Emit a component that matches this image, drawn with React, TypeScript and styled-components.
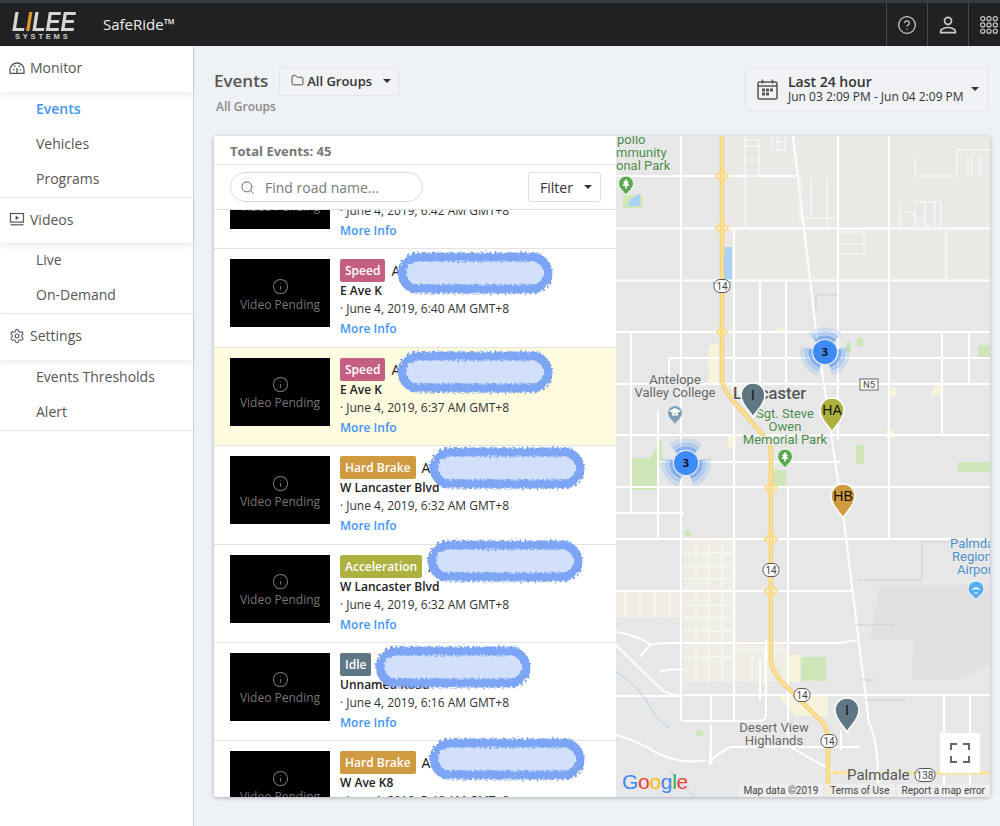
import React from 'react';
import styled, {createGlobalStyle} from 'styled-components';
import {CircleHelp, Folder, Info, Search, Settings} from 'lucide-react';

const GlobalStyle = createGlobalStyle`
  html, body {
    margin: 0;
    height: 826px;
    overflow: hidden;
    background: #eef1f6;
    font-family: "Open Sans", "Liberation Sans", sans-serif;
    color: #212121;
  }
  * { box-sizing: border-box; }
`;

const Page = styled.div`
  width: 1000px;
  height: 826px;
  display: flex;
  flex-direction: column;
  overflow: hidden;
`;

const TopBar = styled.header`
  flex: none;
  height: 46px;
  display: flex;
  align-items: stretch;
  background: #212121;
  border-top: 3px solid #373b3e;
  color: #fff;
`;

const Logo = styled.div`
  width: 103px;
  padding: 7px 0 0 12px;
  display: flex;
  flex-direction: column;
  align-items: flex-start;
`;

const LogoWord = styled.div`
  font-family: "Liberation Sans", sans-serif;
  font-size: 28px;
  line-height: 23px;
  height: 23px;
  font-weight: 700;
  font-style: italic;
  color: #d6d6d6;
  transform: scaleX(0.8);
  transform-origin: left center;
  span { color: #d99a2b; }
`;

const LogoSub = styled.div`
  font-family: "Liberation Sans", sans-serif;
  font-size: 7.5px;
  line-height: 7px;
  margin-left: 3px;
  font-weight: 700;
  letter-spacing: 2.8px;
  color: #cfcfcf;
`;

const Product = styled.div`
  font-size: 15px;
  line-height: 44px;
  margin-top: -1px;
  color: #eee;
  flex: 1;
`;

const TopCell = styled.div<{$clipped?: boolean}>`
  width: ${(p) => (p.$clipped ? 32 : 41)}px;
  display: flex;
  align-items: center;
  justify-content: ${(p) => (p.$clipped ? 'flex-start' : 'center')};
  padding-left: ${(p) => (p.$clipped ? 11 : 0)}px;
  border-left: 1px solid #4a4a4a;
  color: #ccc;
`;

const Body = styled.div`
  flex: 1;
  display: flex;
  min-height: 0;
`;

const Sidebar = styled.nav`
  width: 194px;
  flex: none;
  background: #fff;
  border-right: 1px solid #cfd2d6;
`;

const NavGroup = styled.div`
  border-bottom: 1px solid #e6e7e9;
`;

const NavHead = styled.div`
  height: 45.5px;
  padding: 0 0 2px 9px;
  display: flex;
  align-items: center;
  gap: 5px;
  font-size: 14px;
  color: #555;
  box-shadow: 0 3px 5px rgba(0, 0, 0, 0.07);
  svg { flex: none; }
`;

const NavItem = styled.div<{$active?: boolean}>`
  height: 35px;
  padding: 0 0 2px 36px;
  display: flex;
  align-items: center;
  font-size: 14px;
  color: ${(p) => (p.$active ? '#3f94f5' : '#555')};
  font-weight: ${(p) => (p.$active ? 600 : 400)};
`;

const Main = styled.main`
  flex: 1;
  min-width: 0;
  padding: 19px 10px 0 20px;
  display: flex;
  flex-direction: column;
`;

const TitleRow = styled.div`
  height: 71px;
  display: flex;
  justify-content: space-between;
  align-items: flex-start;
  flex: none;
`;

const TitleBlock = styled.div`
  display: flex;
  flex-direction: column;
`;

const TitleLine = styled.div`
  display: flex;
  align-items: center;
  gap: 11px;
  margin-top: 2px;
  height: 29px;
`;

const Title = styled.div`
  font-size: 17px;
  font-weight: 600;
  color: #555;
  padding-bottom: 2px;
`;

const GroupButton = styled.div`
  width: 120px;
  height: 29px;
  display: flex;
  align-items: center;
  padding: 0 0 2px 11px;
  gap: 3px;
  font-size: 13px;
  font-weight: 600;
  color: #333;
  border: 1px solid #e2e5ea;
  border-radius: 3px;
  background: #f0f2f6;
`;

const Caret = styled.i<{$ml?: number}>`
  display: block;
  width: 0;
  height: 0;
  margin-left: ${(p) => p.$ml ?? 8}px;
  border: 4px solid transparent;
  border-top: 4px solid #333;
  border-bottom: 0;
`;

const SubTitle = styled.div`
  margin: 2px 0 0 2px;
  font-size: 12px;
  font-weight: 600;
  color: #8a8a8a;
`;

const DateBox = styled.div`
  width: 244px;
  height: 44px;
  margin: 2px 1px 0 0;
  display: flex;
  align-items: center;
  padding-left: 11px;
  border: 1px solid #e2e5ea;
  border-radius: 3px;
  background: #f0f2f6;
`;

const DateText = styled.div`
  margin-left: 10px;
  display: flex;
  flex-direction: column;
`;

const DateTop = styled.div`
  font-size: 14px;
  line-height: 16px;
  font-weight: 600;
  color: #333;
`;

const DateBottom = styled.div`
  font-size: 12px;
  line-height: 14px;
  white-space: nowrap;
  color: #333;
`;

const Panel = styled.section`
  width: 776px;
  height: 661px;
  flex: none;
  display: flex;
  background: #fff;
  border-radius: 3px;
  box-shadow: 0 1px 4px rgba(0, 0, 0, 0.28);
  overflow: hidden;
`;

const ListPane = styled.div`
  width: 402px;
  flex: none;
  display: flex;
  flex-direction: column;
  min-height: 0;
`;

const TotalRow = styled.div`
  height: 29px;
  flex: none;
  padding: 2px 0 0 16px;
  display: flex;
  align-items: center;
  font-size: 13px;
  font-weight: 700;
  color: #777;
  border-bottom: 1px solid #e4e4e4;
`;

const SearchRow = styled.div`
  height: 45px;
  flex: none;
  display: flex;
  align-items: center;
  justify-content: space-between;
  padding: 0 15px 0 16px;
  border-bottom: 1px solid #e4e4e4;
  position: relative;
  z-index: 1;
  background: #fff;
`;

const SearchBox = styled.div`
  width: 193px;
  height: 30px;
  display: flex;
  align-items: center;
  gap: 10px;
  padding-left: 9px;
  border: 1px solid #d9d9d9;
  border-radius: 15px;
  font-size: 14px;
  color: #777;
`;

const FilterButton = styled.div`
  width: 73px;
  height: 30px;
  display: flex;
  align-items: center;
  padding-left: 11px;
  font-size: 14px;
  color: #333;
  border: 1px solid #dedede;
  border-radius: 3px;
`;

const EventList = styled.div`
  flex: 1;
  min-height: 0;
  overflow: hidden;
`;

const EventRows = styled.div`
  margin-top: -59px;
`;

const Row = styled.article<{$selected?: boolean}>`
  position: relative;
  height: 98.4px;
  padding: 10px 16px 0;
  display: flex;
  gap: 10px;
  background: ${(p) => (p.$selected ? '#fffbdf' : '#fff')};
  border-bottom: 1px solid #e2e2e2;
`;

const Thumb = styled.div`
  width: 100px;
  height: 68px;
  flex: none;
  padding-top: 4px;
  background: #000;
  color: #777;
  font-size: 12px;
  display: flex;
  flex-direction: column;
  align-items: center;
  justify-content: center;
  gap: 1px;
`;

const RowBody = styled.div`
  min-width: 0;
  display: flex;
  flex-direction: column;
`;

const TitleMeta = styled.div`
  display: flex;
  align-items: center;
  height: 23px;
  gap: 6px;
  font-size: 14px;
`;

const Badge = styled.span<{$color: string}>`
  height: 23px;
  padding: 0 5px;
  display: inline-flex;
  align-items: center;
  border-radius: 2px;
  background: ${(p) => p.$color};
  font-size: 12px;
  font-weight: 600;
  color: #fff;
`;

const Road = styled.div`
  font-size: 12px;
  line-height: 17px;
  font-weight: 600;
  color: #212121;
`;

const DateLine = styled.div`
  margin-top: 1px;
  font-size: 12px;
  line-height: 18px;
  color: #333;
`;

const MoreInfo = styled.a`
  margin-top: 2px;
  font-size: 12px;
  line-height: 18px;
  font-weight: 600;
  color: #3f94f5;
`;

const Scribble = styled.svg<{$left: number; $top: number}>`
  position: absolute;
  left: ${(p) => p.$left}px;
  top: ${(p) => p.$top}px;
  width: 166px;
  height: 56px;
`;

const MapPane = styled.div`
  position: relative;
  flex: 1;
  min-width: 0;
  background: #e7e7e7;
  overflow: hidden;
`;

const MapArt = styled.svg`
  display: block;
  width: 374px;
  height: 661px;
  font-family: Roboto, sans-serif;
`;

const Pin = styled.svg<{$x: number; $y: number}>`
  position: absolute;
  left: ${(p) => p.$x - 616 - 14}px;
  top: ${(p) => p.$y - 136 - 2}px;
  width: 28px;
  height: 38px;
`;

const Cluster = styled.svg<{$x: number; $y: number}>`
  position: absolute;
  left: ${(p) => p.$x - 616 - 28}px;
  top: ${(p) => p.$y - 136 - 28}px;
  width: 56px;
  height: 56px;
`;

const FullScreen = styled.div`
  position: absolute;
  right: 10px;
  bottom: 24px;
  width: 40px;
  height: 40px;
  background: #fff;
  display: flex;
  align-items: center;
  justify-content: center;
`;

const GoogleMark = styled.div`
  position: absolute;
  left: 6px;
  bottom: 2px;
  font-family: "Liberation Sans", sans-serif;
  font-size: 21px;
  line-height: 26px;
  letter-spacing: -0.3px;
`;

const Letter = styled.span<{$c: string}>`
  color: ${(p) => p.$c};
`;

const Attribution = styled.div`
  position: absolute;
  right: 0;
  bottom: 0;
  height: 13px;
  display: flex;
  gap: 2px;
  font-family: Roboto, sans-serif;
  font-size: 10px;
  line-height: 13px;
  color: #444;
`;

const AttrCell = styled.span`
  padding: 0 5px;
  background: rgba(240, 240, 240, 0.75);
`;

const GaugeIcon = () => (
  <svg width="16" height="14" viewBox="0 0 16 14" fill="none" stroke="#555" strokeWidth="1.3">
    <path d="M1 12.3V9a7 7 0 0 1 14 0v3.3H1Z" />
    <path d="M8 12V7M4 8.5l1.4.8M12 8.5l-1.4.8M5.5 4.6l.8 1.2M10.5 4.6l-.8 1.2" />
  </svg>
);

const VideoIcon = () => (
  <svg width="16" height="14" viewBox="0 0 16 14" fill="none" stroke="#555" strokeWidth="1.2">
    <rect x="1.5" y="1.5" width="13" height="8.6" />
    <path d="M1.5 12.8h13" />
    <path d="M6.6 3.7v4.2L10.2 5.8Z" fill="#555" stroke="none" />
  </svg>
);

const PersonIcon = () => (
  <svg width="20" height="20" viewBox="0 0 20 20" fill="none" stroke="#ccc" strokeWidth="1.7">
    <circle cx="10" cy="5.8" r="3.5" />
    <path d="M2.6 17.6v-1.3c0-2.6 4.6-3.8 7.4-3.8s7.4 1.2 7.4 3.8v1.3H2.6Z" />
  </svg>
);

const AppsIcon = () => (
  <svg width="18" height="18" viewBox="0 0 20 20" fill="none" stroke="#ccc" strokeWidth="1.3">
    {[3, 10, 17].map((y) =>
      [3, 10, 17].map((x) => <circle key={`${x}-${y}`} cx={x} cy={y} r="2.3" />),
    )}
  </svg>
);

const CalendarIcon = () => (
  <svg width="21" height="21" viewBox="0 0 21 21" fill="none" stroke="#555" strokeWidth="1.5">
    <rect x="1" y="3" width="19" height="17" rx="1.5" />
    <path d="M5.5 0.5v4M15.5 0.5v4M1 7h19" />
    <path
      d="M5 9.5h3v3H5zM9 9.5h3v3H9zM13 9.5h3v3h-3zM5 13.5h3v3H5zM9 13.5h3v3H9z"
      fill="#555"
      stroke="none"
    />
  </svg>
);

// same rough stroke as the marker scribble over the addresses
const Blob: React.FC<{left: number; top: number}> = ({left, top}) => (
  <Scribble $left={left} $top={top} viewBox="0 0 166 56">
    <defs>
      <filter id="rough" x="-10%" y="-20%" width="120%" height="150%">
        <feTurbulence type="fractalNoise" baseFrequency="0.4" numOctaves="2" seed="4" />
        <feDisplacementMap in="SourceGraphic" scale="6" />
      </filter>
      <filter id="soft" x="-10%" y="-20%" width="120%" height="150%">
        <feGaussianBlur stdDeviation="1.6" />
      </filter>
    </defs>
    <rect x="12" y="13" width="146" height="32" rx="16" fill="#555" opacity="0.3" filter="url(#soft)" />
    <rect
      x="12"
      y="10"
      width="146"
      height="32"
      rx="16"
      fill="#d3e0fb"
      stroke="#7ca5f5"
      strokeWidth="9"
      filter="url(#rough)"
    />
  </Scribble>
);

const events = [
  {kind: 'Speed', color: '#c45f82', road: 'E Ave K', time: '6:42 AM', blob: null},
  {kind: 'Speed', color: '#c45f82', road: 'E Ave K', time: '6:40 AM', blob: [176, -2]},
  {kind: 'Speed', color: '#c45f82', road: 'E Ave K', time: '6:37 AM', blob: [176, -2], selected: true},
  {kind: 'Hard Brake', color: '#cf9a40', road: 'W Lancaster Blvd', time: '6:32 AM', blob: [208, -4]},
  {kind: 'Acceleration', color: '#aeb13f', road: 'W Lancaster Blvd', time: '6:32 AM', blob: [206, -10]},
  {kind: 'Idle', color: '#5f7684', road: 'Unnamed Road', time: '6:16 AM', blob: [154, -2], noLead: true},
  {kind: 'Hard Brake', color: '#cf9a40', road: 'W Ave K8', time: '5:46 AM', blob: [208, -8]},
];

const roads = [
  'M616 176H796',
  'M616 228.500H990',
  'M616 280.500H990',
  'M616 332H990',
  'M669 358H990',
  'M616 384H990',
  'M616 435H990',
  'M657 462H840',
  'M616 487H990',
  'M616 513H684',
  'M616 539H990',
  'M616 591H852',
  'M616 696H684M684 695H990',
  'M684 721H760q6 0 6-8V640',
  'M681 136V721',
  'M734 230V721',
  'M760 280V384M760 660V700',
  'M786 280V400M788 487V747',
  'M838 136V440',
  'M889 136V539',
  'M942 332V435M969 332V384M944 695V797M970 695V797',
  'M631 332V513M658 410V539',
  'M669 358V384',
  'M793 136L816 330L833 447L843 513L869 723Q876 735 878 770V797',
  'M616 632Q640 636 650 645L640 657M650 645Q655 643 670 643H840L857 640',
  'M616 645L660 688Q666 695 684 696M660 672Q668 668 684 670',
  'M710 750V765Q710 758 730 747H860M790 747L835 772',
  'M616 735Q640 742 655 752Q680 765 706 760',
  'M711 696V721M711 725V760M841 730V750',
];

const thinRoads = [
  'M745 136V230M796 178H800V218H838M811 178V218M827 178V228',
  'M745 140H759V176H745M745 146H759M745 160H759M772 136V150H785V136M772 142H785M778 136V150',
  'M915 202H941V228M915 210V228M957 150V176H915V158M972 158V176M968 158V176M957 150H990M980 158V176',
  'M900 202V228H941M900 212H910L930 228M925 202V228M935 202V228',
  'M838 232H864V254H838M838 244H864',
  'M946 280V228',
];

const MapLabel = styled.text<{$color?: string; $size?: number}>`
  fill: ${(p) => p.$color ?? '#666'};
  font-size: ${(p) => p.$size ?? 13}px;
  stroke: #ececec;
  stroke-width: 2px;
  paint-order: stroke;
`;

const ParkPin: React.FC<{x: number; y: number; fill: string}> = ({x, y, fill}) => (
  <g transform={`translate(${x} ${y})`}>
    <path d="M0 9C-3 5-7.500 2-7.500-2.500a7.500 7.500 0 0 1 15 0C7.500 2 3 5 0 9Z" fill={fill} stroke="#fff" />
    <path d="M0-7l3 4H1.500l2 3h-7l2-3H-3ZM-.8 0h1.600v2.500h-1.600Z" fill="#fff" />
  </g>
);

const Shield: React.FC<{x: number; y: number; w?: number; text?: string}> = ({
  x,
  y,
  w = 16,
  text = '14',
}) => (
  <g>
    <rect x={x - w / 2} y={y - 6.500} width={w} height="13" rx="6" fill="#fff" stroke="#555" />
    <text x={x} y={y + 3.500} fontSize="10" fill="#444" textAnchor="middle">
      {text}
    </text>
  </g>
);

const MarkerPin: React.FC<{x: number; y: number; color: string; label: string}> = ({
  x,
  y,
  color,
  label,
}) => (
  <Pin $x={x} $y={y} viewBox="0 0 28 38">
    <path
      d="M14 36C10.500 29 2 24 2 14a12 12 0 0 1 24 0c0 10-8.500 15-12 22Z"
      fill={color}
      stroke="#fff"
      strokeWidth="1.500"
    />
    <text x="14" y="19" fontSize="14" fontFamily="Liberation Sans, sans-serif" textAnchor="middle" fill="#111">
      {label}
    </text>
  </Pin>
);

const arc = (r: number) => {
  const a = (42 * Math.PI) / 180;
  const x = r * Math.sin(a);
  const y = r * Math.cos(a);
  return `M${-x} ${-y}A${r} ${r} 0 0 1 ${x} ${-y}`;
};

const ClusterMark: React.FC<{x: number; y: number}> = ({x, y}) => (
  <Cluster $x={x} $y={y} viewBox="-28 -28 56 56">
    {[0, 120, 240].map((a) => (
      <g key={a} transform={`rotate(${a})`} fill="none" stroke="#3f8cf5" strokeWidth="3.500">
        <path d={arc(15)} opacity="0.6" />
        <path d={arc(19)} opacity="0.32" />
        <path d={arc(23)} opacity="0.16" />
      </g>
    ))}
    <circle r="12" fill="#3d8bf7" />
    <text y="4" fontSize="11" fontWeight="700" fontFamily="Open Sans, sans-serif" textAnchor="middle" fill="#111">
      3
    </text>
  </Cluster>
);

const HIGHWAY =
  'M722 136V378Q722 386 729 396L768 441Q771 446 771 456V660Q771 668 780 680L823 723Q828 730 828 742V797';

const MapDrawing = () => (
  <MapArt viewBox="616 136 374 661">
    <rect x="616" y="136" width="374" height="661" fill="#e7e7e7" />
    <rect x="720" y="136" width="270" height="145" fill="#ebe9e5" />
    <path d="M880 585H990V665L960 680H912L914 640H870Z" fill="#e1e1e1" />
    <path d="M684 540H736V682H684ZM736 645H788V682H736ZM616 592H684V618H616Z" fill="#efede5" />
    <path
      d="M696 540V682M709 540V682M722 540V682M684 553H736M684 566H736M684 579H736M684 605H736M684 618H736M684 631H736M684 657H736M736 650H786M752 645V682M765 645V682M625 592V618M640 592V618M655 592V618M670 592V618"
      stroke="#f8f6ef"
      strokeWidth="1.500"
      fill="none"
    />

    <path d="M801 657H826V682L810 680L801 682Z" fill="#cfe7b8" />
    <path d="M632 458H650L660 440H662V466H657V490H632Z" fill="#cfe7b8" />
    <path d="M846 342H851V352H846ZM857 338H863V346H857ZM856 445H864V464H856ZM978 345H990V358H978ZM958 462H990V472H958ZM685 530H691V536H685ZM696 730H703V736H696ZM623 195H642V208H623Z" fill="#cfe7b8" />
    <path d="M772 470H786V487H772Z" fill="#cfe7b8" />
    <path d="M725 247H732V283H722Z" fill="#a9d2f5" />
    <path d="M711 282H722V292Z" fill="#a9d2f5" />
    <path d="M630 200L640 193V206H628Z" fill="#a9d2f5" />
    <path d="M709 345L719 343V383H708ZM776 330Q784 325 793 333L786 334Q780 330 776 333ZM730 384H742V395H734Z" fill="#faf3dc" />
    <path d="M778 695H828V716H795ZM786 655H800V682H786ZM888 396H896V388H892ZM935 385H942V395H930ZM886 430H894V438H886ZM728 435H736V448H728Z" fill="#faf3dc" />

    <g fill="none" stroke="#fff" strokeWidth="2">
      {roads.map((d, i) => (
        <path key={i} d={d} />
      ))}
    </g>
    <g fill="none" stroke="#f6f6f4" strokeWidth="1.500">
      {thinRoads.map((d, i) => (
        <path key={i} d={d} />
      ))}
    </g>
    <g fill="none" stroke="#cfcfcf" strokeWidth="1">
      <path d="M816 310V295H838M858 580H922V542H990M856 625H895M860 680H875M866 700H905" />
    </g>
    <g fill="none" stroke="#a9d2f5" strokeWidth="1">
      <path d="M616 672Q640 685 655 715Q668 730 670 727M670 770Q680 785 695 797" />
    </g>

    <path d={HIGHWAY} fill="none" stroke="#f0cf76" strokeWidth="4.500" />
    <path d={HIGHWAY} fill="none" stroke="#fde293" strokeWidth="2.500" />
    <path d="M828 772Q840 773 850 773H990" fill="none" stroke="#fde293" strokeWidth="3" />
    <g fill="none" stroke="#fbdc8c" strokeWidth="2">
      <path d="M716 176l6-6 6 6-6 6ZM716 228l6-6 6 6-6 6ZM717 332l5-6 5 6-5 6ZM765 539l6-7 6 7-6 7ZM765 591l6-7 6 7-6 7ZM765 488l6-7 6 7-6 7Z" />
    </g>

    <Shield x={722} y={286} />
    <Shield x={771} y={570} />
    <Shield x={802} y={695} />
    <Shield x={829} y={741} />
    <Shield x={925} y={775} w={20} text="138" />
    <g>
      <rect x="860" y="379" width="18" height="11" fill="#fff" stroke="#666" />
      <text x="869" y="388" fontSize="9.500" fill="#444" textAnchor="middle">
        N5
      </text>
    </g>

    <MapLabel x="617" y="144" $color="#4b8a4a">pollo</MapLabel>
    <MapLabel x="616" y="157" $color="#4b8a4a">mmunity</MapLabel>
    <MapLabel x="616" y="170" $color="#4b8a4a">onal Park</MapLabel>
    <ParkPin x={626} y={186} fill="#5aa84f" />
    <MapLabel x="675" y="384" textAnchor="middle">Antelope</MapLabel>
    <MapLabel x="675" y="397" textAnchor="middle">Valley College</MapLabel>
    <path d="M675 424c-2-4-7-6-7-11a7 7 0 0 1 14 0c0 5-5 7-7 11Z" fill="#7e9db4" />
    <path d="M669 411l6-3 6 3-6 3ZM672 413v2.500h6V413Z" fill="#fff" />
    <MapLabel x="733" y="399" $size={16.500} $color="#555" fontWeight="500">Lancaster</MapLabel>
    <MapLabel x="785" y="418" textAnchor="middle" $color="#4b8a4a">Sgt. Steve</MapLabel>
    <MapLabel x="785" y="431" textAnchor="middle" $color="#4b8a4a">Owen</MapLabel>
    <MapLabel x="785" y="444" textAnchor="middle" $color="#4b8a4a">Memorial Park</MapLabel>
    <ParkPin x={785} y={459} fill="#5aa84f" />
    <MapLabel x="950" y="548" $color="#4a90c8">Palmdale</MapLabel>
    <MapLabel x="952" y="561" $color="#4a90c8">Regional</MapLabel>
    <MapLabel x="957" y="574" $color="#4a90c8">Airport</MapLabel>
    <path d="M976 600c-2-4-8-6-8-11a8 8 0 0 1 16 0c0 5-6 7-8 11Z" fill="#55aef0" stroke="#fff" />
    <path d="M976 583v4l-4 2v1l4-1v3l-1.500 1v1l1.500-.5 1.500.5v-1l-1.500-1v-3l4 1v-1l-4-2v-4Z" fill="#fff" />
    <MapLabel x="774" y="732" textAnchor="middle">Desert View</MapLabel>
    <MapLabel x="774" y="745" textAnchor="middle">Highlands</MapLabel>
    <MapLabel x="847" y="780" $size={15} $color="#555">Palmdale</MapLabel>
  </MapArt>
);

export default function App() {
  return (
    <>
      <GlobalStyle />
      <Page>
        <TopBar>
          <Logo>
            <LogoWord>
              L<span>I</span>LEE
            </LogoWord>
            <LogoSub>SYSTEMS</LogoSub>
          </Logo>
          <Product>SafeRide™</Product>
          <TopCell>
            <CircleHelp size={20} strokeWidth={1.5} />
          </TopCell>
          <TopCell>
            <PersonIcon />
          </TopCell>
          <TopCell $clipped>
            <AppsIcon />
          </TopCell>
        </TopBar>
        <Body>
          <Sidebar>
            <NavGroup>
              <NavHead>
                <GaugeIcon />
                Monitor
              </NavHead>
              <NavItem $active>Events</NavItem>
              <NavItem>Vehicles</NavItem>
              <NavItem>Programs</NavItem>
            </NavGroup>
            <NavGroup>
              <NavHead>
                <VideoIcon />
                Videos
              </NavHead>
              <NavItem>Live</NavItem>
              <NavItem>On-Demand</NavItem>
            </NavGroup>
            <NavGroup>
              <NavHead>
                <Settings size={16} color="#555" strokeWidth={1.6} />
                Settings
              </NavHead>
              <NavItem>Events Thresholds</NavItem>
              <NavItem>Alert</NavItem>
            </NavGroup>
          </Sidebar>
          <Main>
            <TitleRow>
              <TitleBlock>
                <TitleLine>
                  <Title>Events</Title>
                  <GroupButton>
                    <Folder size={13} strokeWidth={1.6} />
                    All Groups
                    <Caret />
                  </GroupButton>
                </TitleLine>
                <SubTitle>All Groups</SubTitle>
              </TitleBlock>
              <DateBox>
                <CalendarIcon />
                <DateText>
                  <DateTop>Last 24 hour</DateTop>
                  <DateBottom>Jun 03 2:09 PM - Jun 04 2:09 PM</DateBottom>
                </DateText>
                <Caret $ml={7} />
              </DateBox>
            </TitleRow>
            <Panel>
              <ListPane>
                <TotalRow>Total Events: 45</TotalRow>
                <SearchRow>
                  <SearchBox>
                    <Search size={15} color="#666" strokeWidth={1.6} />
                    Find road name...
                  </SearchBox>
                  <FilterButton>
                    Filter
                    <Caret $ml={11} />
                  </FilterButton>
                </SearchRow>
                <EventList>
                  <EventRows>
                    {events.map((e, i) => (
                      <Row key={i} $selected={e.selected}>
                        <Thumb>
                          <Info size={17} strokeWidth={1.5} />
                          Video Pending
                        </Thumb>
                        <RowBody>
                          <TitleMeta>
                            <Badge $color={e.color}>{e.kind}</Badge>
                            {e.noLead ? null : 'A'}
                          </TitleMeta>
                          <Road>{e.road}</Road>
                          <DateLine>· June 4, 2019, {e.time} GMT+8</DateLine>
                          <MoreInfo>More Info</MoreInfo>
                        </RowBody>
                        {e.blob ? <Blob left={e.blob[0]} top={e.blob[1]} /> : null}
                      </Row>
                    ))}
                  </EventRows>
                </EventList>
              </ListPane>
              <MapPane>
                <MapDrawing />
                <ClusterMark x={825} y={352} />
                <ClusterMark x={686} y={463} />
                <MarkerPin x={753} y={383} color="#5f7684" label="I" />
                <MarkerPin x={832} y={398} color="#aeb13f" label="HA" />
                <MarkerPin x={843} y={484} color="#cf9a40" label="HB" />
                <MarkerPin x={847} y={698} color="#5f7684" label="I" />
                <FullScreen>
                  <svg width="20" height="20" viewBox="0 0 20 20" fill="none" stroke="#666" strokeWidth="2">
                    <path d="M1 7V1h6M13 1h6v6M19 13v6h-6M7 19H1v-6" />
                  </svg>
                </FullScreen>
                <GoogleMark>
                  <Letter $c="#4285f4">G</Letter>
                  <Letter $c="#ea4335">o</Letter>
                  <Letter $c="#fbbc05">o</Letter>
                  <Letter $c="#4285f4">g</Letter>
                  <Letter $c="#34a853">l</Letter>
                  <Letter $c="#ea4335">e</Letter>
                </GoogleMark>
                <Attribution>
                  <AttrCell>Map data ©2019</AttrCell>
                  <AttrCell>Terms of Use</AttrCell>
                  <AttrCell>Report a map error</AttrCell>
                </Attribution>
              </MapPane>
            </Panel>
          </Main>
        </Body>
      </Page>
    </>
  );
}
